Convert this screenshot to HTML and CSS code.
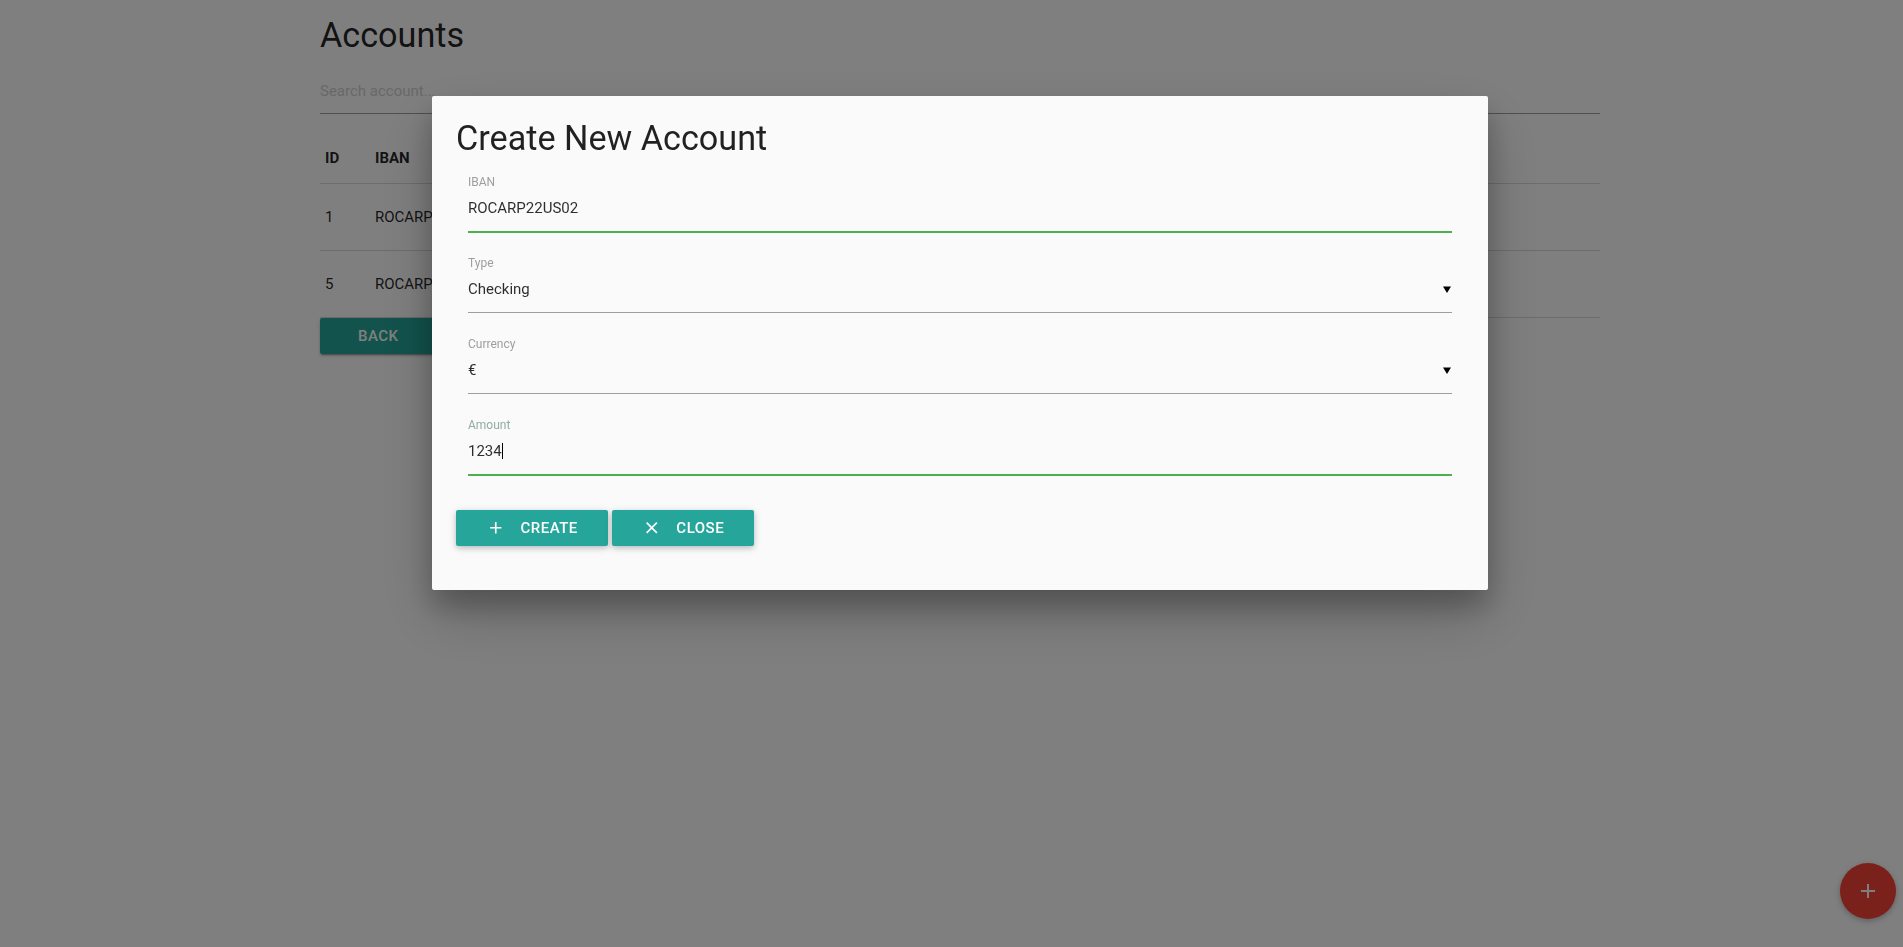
FILE: index.html
```html
<!DOCTYPE html>
<html lang="en">
<head>
<meta charset="utf-8">
<title>Accounts</title>
<link rel="stylesheet" href="styles.css">
</head>
<body>
<div class="page">
  <h1 class="page-title">Accounts</h1>
  <input class="search-input" type="text" placeholder="Search account...">
  <table class="accounts">
    <thead>
      <tr>
        <th class="col-id">ID</th>
        <th class="col-iban">IBAN</th>
        <th></th>
      </tr>
    </thead>
    <tbody>
      <tr>
        <td class="col-id">1</td>
        <td class="col-iban">ROCARP</td>
        <td></td>
      </tr>
      <tr>
        <td class="col-id">5</td>
        <td class="col-iban">ROCARP</td>
        <td></td>
      </tr>
    </tbody>
  </table>
  <button class="btn btn-back">Back</button>
</div>

<button class="fab" aria-label="Add account">
  <svg width="24" height="24" viewBox="0 0 24 24"><path d="M19 13h-6v6h-2v-6H5v-2h6V5h2v6h6v2z"/></svg>
</button>

<div class="overlay"></div>

<div class="modal">
  <h4 class="modal-title">Create New Account</h4>
  <div class="fields">
    <div class="field field-valid">
      <div class="field-label">IBAN</div>
      <div class="field-value"><span>ROCARP22US02</span></div>
    </div>
    <div class="field">
      <div class="field-label">Type</div>
      <div class="field-value"><span>Checking</span><svg class="select-arrow" width="8" height="7" viewBox="0 0 8 7"><path d="M0 0.5h8L4 7z"/></svg></div>
    </div>
    <div class="field">
      <div class="field-label">Currency</div>
      <div class="field-value"><span>€</span><svg class="select-arrow" width="8" height="7" viewBox="0 0 8 7"><path d="M0 0.5h8L4 7z"/></svg></div>
    </div>
    <div class="field field-valid field-focus">
      <div class="field-label">Amount</div>
      <div class="field-value"><span>1234<span class="caret"></span></span></div>
    </div>
  </div>
  <div class="actions">
    <button class="btn btn-modal">
      <svg class="btn-icon" viewBox="0 0 24 24"><path d="M19 13h-6v6h-2v-6H5v-2h6V5h2v6h6v2z"/></svg>
      <span>Create</span>
    </button>
    <button class="btn btn-modal">
      <svg class="btn-icon" viewBox="0 0 24 24"><path d="M19 6.41L17.59 5 12 10.59 6.41 5 5 6.41 10.59 12 5 17.59 6.41 19 12 13.41 17.59 19 19 17.59 13.41 12z"/></svg>
      <span>Close</span>
    </button>
  </div>
</div>
</body>
</html>
```

FILE: styles.css
```css
html, body {
  margin: 0;
  padding: 0;
}

body {
  background: #ffffff;
  font-family: Roboto, "Noto Sans", "Liberation Sans", sans-serif;
  font-size: 15px;
  color: rgba(0, 0, 0, 0.87);
  overflow: hidden;
  height: 947px;
}

.page {
  margin-left: 320px;
  width: 1280px;
  padding-top: 16px;
}

.page-title {
  margin: 0;
  font-size: 34.2px;
  line-height: 38px;
  font-weight: 400;
}

.search-input {
  display: block;
  box-sizing: content-box;
  width: 100%;
  height: 45px;
  margin: 14px 0 0;
  padding: 0;
  border: none;
  border-bottom: 1px solid #9e9e9e;
  border-radius: 0;
  background: transparent;
  outline: none;
  font-family: Roboto, "Liberation Sans", sans-serif;
  font-size: 15px;
  color: rgba(0, 0, 0, 0.87);
}

.search-input::placeholder {
  color: #d1d1d1;
}

.accounts {
  width: 100%;
  margin-top: 16px;
  border-collapse: separate;
  border-spacing: 0;
}

.accounts th,
.accounts td {
  text-align: left;
  border-bottom: 1px solid rgba(0, 0, 0, 0.14);
  line-height: 22px;
  font-size: 15px;
  vertical-align: middle;
}

.accounts th {
  padding: 17px 5px 14px;
  font-weight: 700;
}

.accounts td {
  padding: 22px 5px;
  font-weight: 400;
}

.accounts .col-id {
  width: 40px;
}

.accounts .col-iban {
  width: 200px;
}

.btn {
  border: none;
  border-radius: 2px;
  background: #26a69a;
  color: #ffffff;
  height: 36px;
  font-family: Roboto, "Liberation Sans", sans-serif;
  font-size: 15px;
  font-weight: 500;
  letter-spacing: 0.5px;
  text-transform: uppercase;
  box-shadow: 0 2px 2px 0 rgba(0, 0, 0, 0.14), 0 1px 5px 0 rgba(0, 0, 0, 0.12), 0 3px 1px -2px rgba(0, 0, 0, 0.2);
  cursor: pointer;
}

.btn-back {
  display: block;
  padding: 0 38px;
  line-height: 36px;
}

.fab {
  position: fixed;
  right: 7px;
  bottom: 28px;
  width: 56px;
  height: 56px;
  border: none;
  border-radius: 50%;
  background: #f44336;
  display: flex;
  align-items: center;
  justify-content: center;
  padding: 0;
  box-shadow: 0 2px 5px 0 rgba(0, 0, 0, 0.16), 0 2px 10px 0 rgba(0, 0, 0, 0.12);
  z-index: 1;
}

.fab svg {
  fill: #ffffff;
  display: block;
}

.overlay {
  position: fixed;
  top: 0;
  left: 0;
  right: 0;
  bottom: 0;
  background: rgba(0, 0, 0, 0.5);
  z-index: 10;
}

.modal {
  position: fixed;
  top: 96px;
  left: 432px;
  width: 1056px;
  box-sizing: border-box;
  padding: 24px 24px 44px;
  background: #fafafa;
  border-radius: 2px;
  box-shadow: 0 16px 28px 0 rgba(0, 0, 0, 0.22), 0 25px 55px 0 rgba(0, 0, 0, 0.21);
  z-index: 20;
}

.modal-title {
  margin: 0 0 18.38px;
  font-size: 34.2px;
  line-height: 37.62px;
  font-weight: 400;
  color: rgba(0, 0, 0, 0.87);
}

.fields {
  display: flex;
  flex-direction: column;
  gap: 25px;
  padding: 0 12px;
}

.field-label {
  height: 8px;
  line-height: 9px;
  padding-top: 2px;
  font-size: 12px;
  color: #9e9e9e;
}

.field-focus .field-label {
  color: #8fae9f;
}

.field-value {
  height: 45px;
  line-height: 45px;
  font-size: 15px;
  color: rgba(0, 0, 0, 0.82);
  border-bottom: 1px solid #9e9e9e;
  display: flex;
  align-items: center;
  justify-content: space-between;
}

.field-valid .field-value {
  border-bottom-color: #4caf50;
  box-shadow: 0 1px 0 0 #4caf50;
}

.select-arrow {
  display: block;
  fill: #000000;
  margin-right: 1px;
}

.caret {
  display: inline-block;
  width: 1px;
  height: 16px;
  background: #000000;
  vertical-align: -3px;
}

.actions {
  display: flex;
  gap: 4px;
  margin-top: 35px;
}

.btn-modal {
  display: flex;
  align-items: center;
  padding: 0 30px;
  box-shadow: 0 2px 5px 0 rgba(0, 0, 0, 0.16), 0 2px 10px 0 rgba(0, 0, 0, 0.12);
}

.btn-icon {
  width: 19.5px;
  height: 19.5px;
  fill: #ffffff;
  margin-right: 15px;
  flex: none;
}
```
